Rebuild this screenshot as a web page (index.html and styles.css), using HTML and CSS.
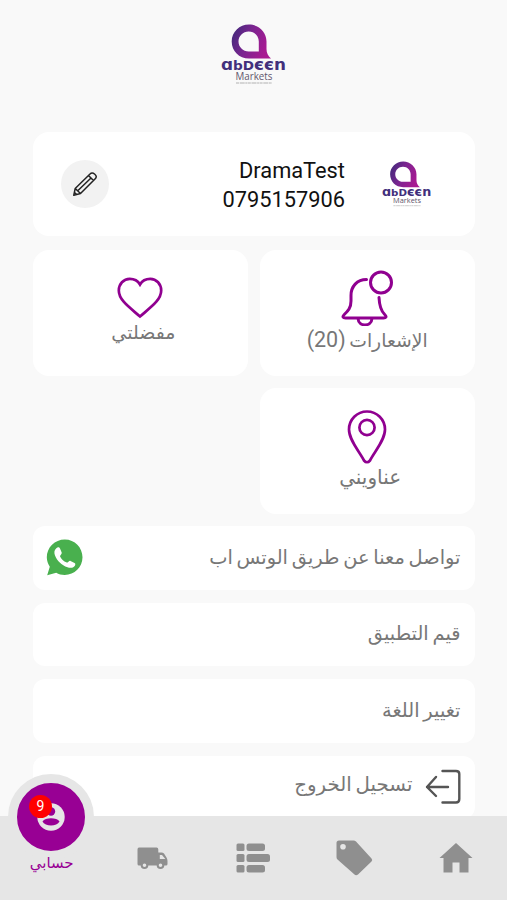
FILE: index.html
```html
<!DOCTYPE html>
<html lang="ar" dir="rtl">
<head>
<meta charset="utf-8">
<title>حسابي</title>
<link rel="stylesheet" href="styles.css">
</head>
<body>
<svg class="defs" aria-hidden="true">
  <defs>
    <linearGradient id="brand" x1="0" y1="0" x2="1" y2="0.35">
      <stop offset="0" stop-color="#3b2a78"/><stop offset="0.5" stop-color="#7a2590"/><stop offset="1" stop-color="#a81a92"/>
    </linearGradient>
    <symbol id="logo" viewBox="0 0 66 62">
      <path fill="url(#brand)" fill-rule="evenodd" d="M28 .5C37.500 .5 45.500 8 45.500 17.500V25C45.500 29 47 32 50 34.500H28C18 34.500 10.700 27 10.700 17.500S18.500 .5 28 .5ZM27.700 7.500C22 7.500 17.500 12 17.500 17.500S22 27.500 27.700 27.500H37.800V17.500C37.800 12 33.500 7.500 27.700 7.500Z"/>
      <g direction="ltr" text-anchor="start">
        <text class="logo-name" x="0" y="46" textLength="65" lengthAdjust="spacingAndGlyphs">ɑ<tspan class="tall">bD</tspan>єєn</text>
        <text class="logo-sub" x="14.500" y="55.500" textLength="37" lengthAdjust="spacingAndGlyphs">Markets</text>
      </g>
      <path d="M15 59H51" stroke="#aaa" stroke-width="1.300" stroke-dasharray="3 .7 5 .6 2 .5" opacity=".6"/>
    </symbol>
  </defs>
</svg>
<div class="app">
  <main class="content">
    <header class="brand"><svg class="logo"><use href="#logo"/></svg></header>

    <section class="card profile">
      <svg class="avatar"><use href="#logo"/></svg>
      <div class="who"><span>DramaTest</span><span>0795157906</span></div>
      <button class="edit" aria-label="تعديل">
        <svg width="24" height="24" viewBox="0 0 24 24" fill="none" stroke="#222" stroke-width="1.500" stroke-linejoin="round">
          <path d="M.8 23.200 2.200 16.500 17 2Q19-.2 21.800 2.200T22 7L7.500 21.500ZM2.200 16.500 7.500 21.500M15.500 3.500 20.500 8.500M5 18.500 18 6M1.500 20.500 3.500 22.300"/>
        </svg>
      </button>
    </section>

    <section class="tiles">
      <div class="card tile bell">
        <svg width="54" height="56" viewBox="0 0 54 56" fill="none" stroke="#900090" stroke-width="3" stroke-linecap="round">
          <circle cx="41" cy="12.500" r="10.500"/>
          <path d="M26.500 9.500C17 9.500 11 16.500 11 25.500V31C11 38 8 41 4.300 44.500C2 46.700 3 48 5.500 48H43.500C46 48 47 46.700 44.700 44.500C41.500 41.500 39.500 38 39 27.500M18 48.500C18.500 57 31.500 57 32 48.500"/>
        </svg>
        <span class="label">الإشعارات <bdi class="num">(20)</bdi></span>
      </div>
      <div class="card tile heart">
        <svg width="46" height="42" viewBox="0 0 46 42" fill="none" stroke="#900090" stroke-width="2.700">
          <path d="M23 39.500C12 30 1.800 23 1.800 13.500C1.800 7 6.500 1.800 12.800 1.800C17.500 1.800 21 4 23 7.500C25 4 28.500 1.800 33.200 1.800C39.500 1.800 44.200 7 44.200 13.500C44.200 23 34 30 23 39.500Z"/>
        </svg>
        <span class="label">مفضلتي</span>
      </div>
      <div class="card tile pin">
        <svg width="40" height="54" viewBox="0 0 40 54" fill="none" stroke="#900090" stroke-width="2.700">
          <path d="M17 50.500C12 41 2 30 2 19.500C2 9.500 10 1.500 20 1.500S38 9.500 38 19.500C38 30 28 41 23 50.500Q20 54 17 50.500Z"/><circle cx="20" cy="17.500" r="7.600"/>
        </svg>
        <span class="label">عناويني</span>
      </div>
    </section>

    <section class="rows">
      <div class="card row">
        <span class="label">تواصل معنا عن طريق الوتس اب</span>
        <svg width="37" height="37" viewBox="0 0 37 37">
          <path fill="#49b04e" d="M18.800 .5C28.800 .5 36.500 8.500 36.500 18.300S28.500 36 18.700 36C15.500 36 12.700 35.200 10.200 33.800L1.200 36.300 3.800 27.800C2 25 .8 21.800 .8 18.300C.8 8.500 8.800 .5 18.800 .5Z"/>
          <path fill="#fff" d="M10.300 9.200C12 7.700 13.400 8.300 14 9.600L15.700 13.500C16.200 15 14 16.300 14 17.200C15.200 20 17.500 22.200 20.800 23.600C22 24 23 21.300 24.500 21.900L28.500 23.900C29.800 24.500 29.300 26 28.700 26.900C27.200 29 24.300 29.300 21.500 28.300C15.600 26.200 11 21.700 8.900 16.200C7.900 13.200 8.300 11 10.300 9.200Z"/>
        </svg>
      </div>
      <div class="card row"><span class="label">قيم التطبيق</span></div>
      <div class="card row"><span class="label">تغيير اللغة</span></div>
      <div class="card row logout">
        <svg width="36" height="36" viewBox="0 0 36 36" fill="none" stroke="#555" stroke-width="2.400" stroke-linecap="round" stroke-linejoin="round">
          <path d="M17.500 2H31Q34.300 2 34.300 5V30Q34.300 33.500 31 33.500H17.500M23 18H2M11 8 2 18 11 27"/>
        </svg>
        <span class="label">تسجيل الخروج</span>
      </div>
    </section>
  </main>

  <nav class="nav">
    <a class="item"><svg width="34" height="30" viewBox="0 0 34 30" fill="#8f8f8f"><path d="M17 0 33.500 15H29.500V29.500H20.500V19.500H13.500V29.500H4.500V15H.5Z"/></svg></a>
    <a class="item"><svg width="37" height="36" viewBox="0 0 37 36"><path fill="#8f8f8f" fill-rule="evenodd" d="M3 .5H17.500Q19 .5 20 1.500L35.500 18.500Q37 20 35.500 21.500L22 34.500Q20 36 18.500 34.500L1.500 19.500Q.5 18.500 .5 17V3Q.5 .5 3 .5ZM7 4A2.800 2.800 0 1 0 7 9.600A2.800 2.800 0 1 0 7 4Z"/></svg></a>
    <a class="item"><svg width="34" height="30" viewBox="0 0 34 30" fill="#8f8f8f"><rect x=".5" y=".5" width="8" height="7.500" rx="1.500"/><rect x=".5" y="11" width="8" height="8" rx="1.500"/><rect x=".5" y="22" width="8" height="7.500" rx="1.500"/><rect x="10.500" y=".5" width="18.500" height="7.500" rx="2.500"/><rect x="10.500" y="11" width="23.500" height="8" rx="2.500"/><rect x="10.500" y="22" width="18.500" height="7.500" rx="2.500"/></svg></a>
    <a class="item"><svg width="31" height="22" viewBox="0 0 31 22"><path fill="#8f8f8f" d="M2 .5H19.500Q21.300 .5 21.300 2.500V5.500H24.500Q26 5.500 27 6.500L29.500 10.500Q30.500 12 30.500 14V17Q30.500 18.500 29 18.500H2Q.5 18.500 .5 17V2.500Q.5 .5 2 .5Z"/><path fill="#e6e6e6" d="M22.800 8H25L28.300 12H22.800Z"/><g fill="#e6e6e6" stroke="#8f8f8f" stroke-width="2"><circle cx="7.500" cy="18.200" r="2.800"/><circle cx="23.500" cy="18.200" r="2.800"/></g></svg></a>
    <a class="item active">
      <span class="bubble">
        <svg width="28" height="28" viewBox="0 0 28 28"><circle cx="14" cy="14" r="13.700" fill="#e6e6e6"/><circle cx="14" cy="8.500" r="4.200" fill="#980094"/><path fill="#980094" d="M5.500 18.500C8 14.200 20 14.200 22.500 18.500C20 23.800 8 23.800 5.500 18.500Z"/></svg>
        <b class="badge">9</b>
      </span>
      <span class="caption">حسابي</span>
    </a>
  </nav>
</div>
</body>
</html>
```

FILE: styles.css
```css
* { box-sizing: border-box; }
body {
  margin: 0;
  background: #f9f9f9;
  color: #777;
  font-family: Roboto, "DejaVu Sans", sans-serif;
}
.defs { position: absolute; width: 0; height: 0; }
.app { height: 900px; display: flex; flex-direction: column; overflow: hidden; }
.content { flex: 1; min-height: 0; overflow: hidden; padding: 24px 32.5px 0 33px; }
.brand { height: 108px; display: flex; justify-content: center; }
.logo { width: 66px; height: 62px; }
.logo-name { font: 700 15.5px "DejaVu Sans", sans-serif; fill: #42307c; }
.logo-name .tall { font-size: 12.5px; }
.logo-sub { font: 10px "Open Sans", sans-serif; fill: #62566c; }
.card { background: #fff; border-radius: 16px; }

.profile { height: 104px; display: flex; align-items: center; padding: 0 43px 0 28px; }
.avatar { width: 50px; height: 47px; }
.who {
  margin: 2px 36.5px 0 auto;
  display: flex;
  flex-direction: column;
  align-items: flex-start;
  color: #111;
  font-size: 21.8px;
  line-height: 29px;
}
.edit {
  width: 48px; height: 48px;
  padding: 0;
  border: 0;
  border-radius: 50%;
  background: #f2f2f2;
  display: flex;
  align-items: center;
  justify-content: center;
}

.tiles { margin: 14px 0 12px; display: grid; grid-template-columns: 1fr 1fr; grid-auto-rows: 126px; gap: 12px; }
.tile { display: flex; flex-direction: column; align-items: center; }
.tile svg { flex: none; }
.label { font-family: "DejaVu Sans", sans-serif; font-size: 19.4px; line-height: 26px; word-spacing: -2.4px; white-space: nowrap; }
.bell { padding-top: 20px; }
.bell .label { font-size: 18.8px; padding-top: 1px; }
.num { font-family: Roboto, sans-serif; font-size: 21.5px; }
.heart { padding-top: 27px; }
.heart .label { font-size: 19px; padding-left: 6px; }
.pin { padding-top: 22px; }
.pin .label { font-size: 20px; padding-left: 6px; }

.rows { display: flex; flex-direction: column; gap: 13px; }
.row {
  height: 63.5px;
  flex: none;
  display: flex;
  align-items: center;
  justify-content: space-between;
  padding: 0 14px 0 13px;
  border-radius: 12px;
}
.logout { justify-content: flex-start; gap: 12px; }
.logout .label { font-size: 19.8px; padding-bottom: 4px; }

.nav { height: 84px; flex: none; display: flex; background: #e6e6e6; position: relative; }
.item { flex: 1; display: flex; align-items: center; justify-content: center; }
.active { position: relative; flex-direction: column; justify-content: flex-start; }
.bubble {
  flex: none;
  width: 86px; height: 86px;
  margin-top: -42px;
  border: 9px solid #e6e6e6;
  border-radius: 50%;
  background: #980094;
  display: flex;
  align-items: center;
  justify-content: center;
}
.badge {
  position: absolute;
  left: 29px; top: -21px;
  width: 23px; height: 23px;
  border-radius: 50%;
  background: #f00;
  color: #fff;
  font: 14px/23px Roboto, sans-serif;
  text-align: center;
}
.caption { margin-top: -8px; padding-left: 2px; color: #980094; font-family: "DejaVu Sans", sans-serif; font-size: 15px; line-height: 22px; }
```
